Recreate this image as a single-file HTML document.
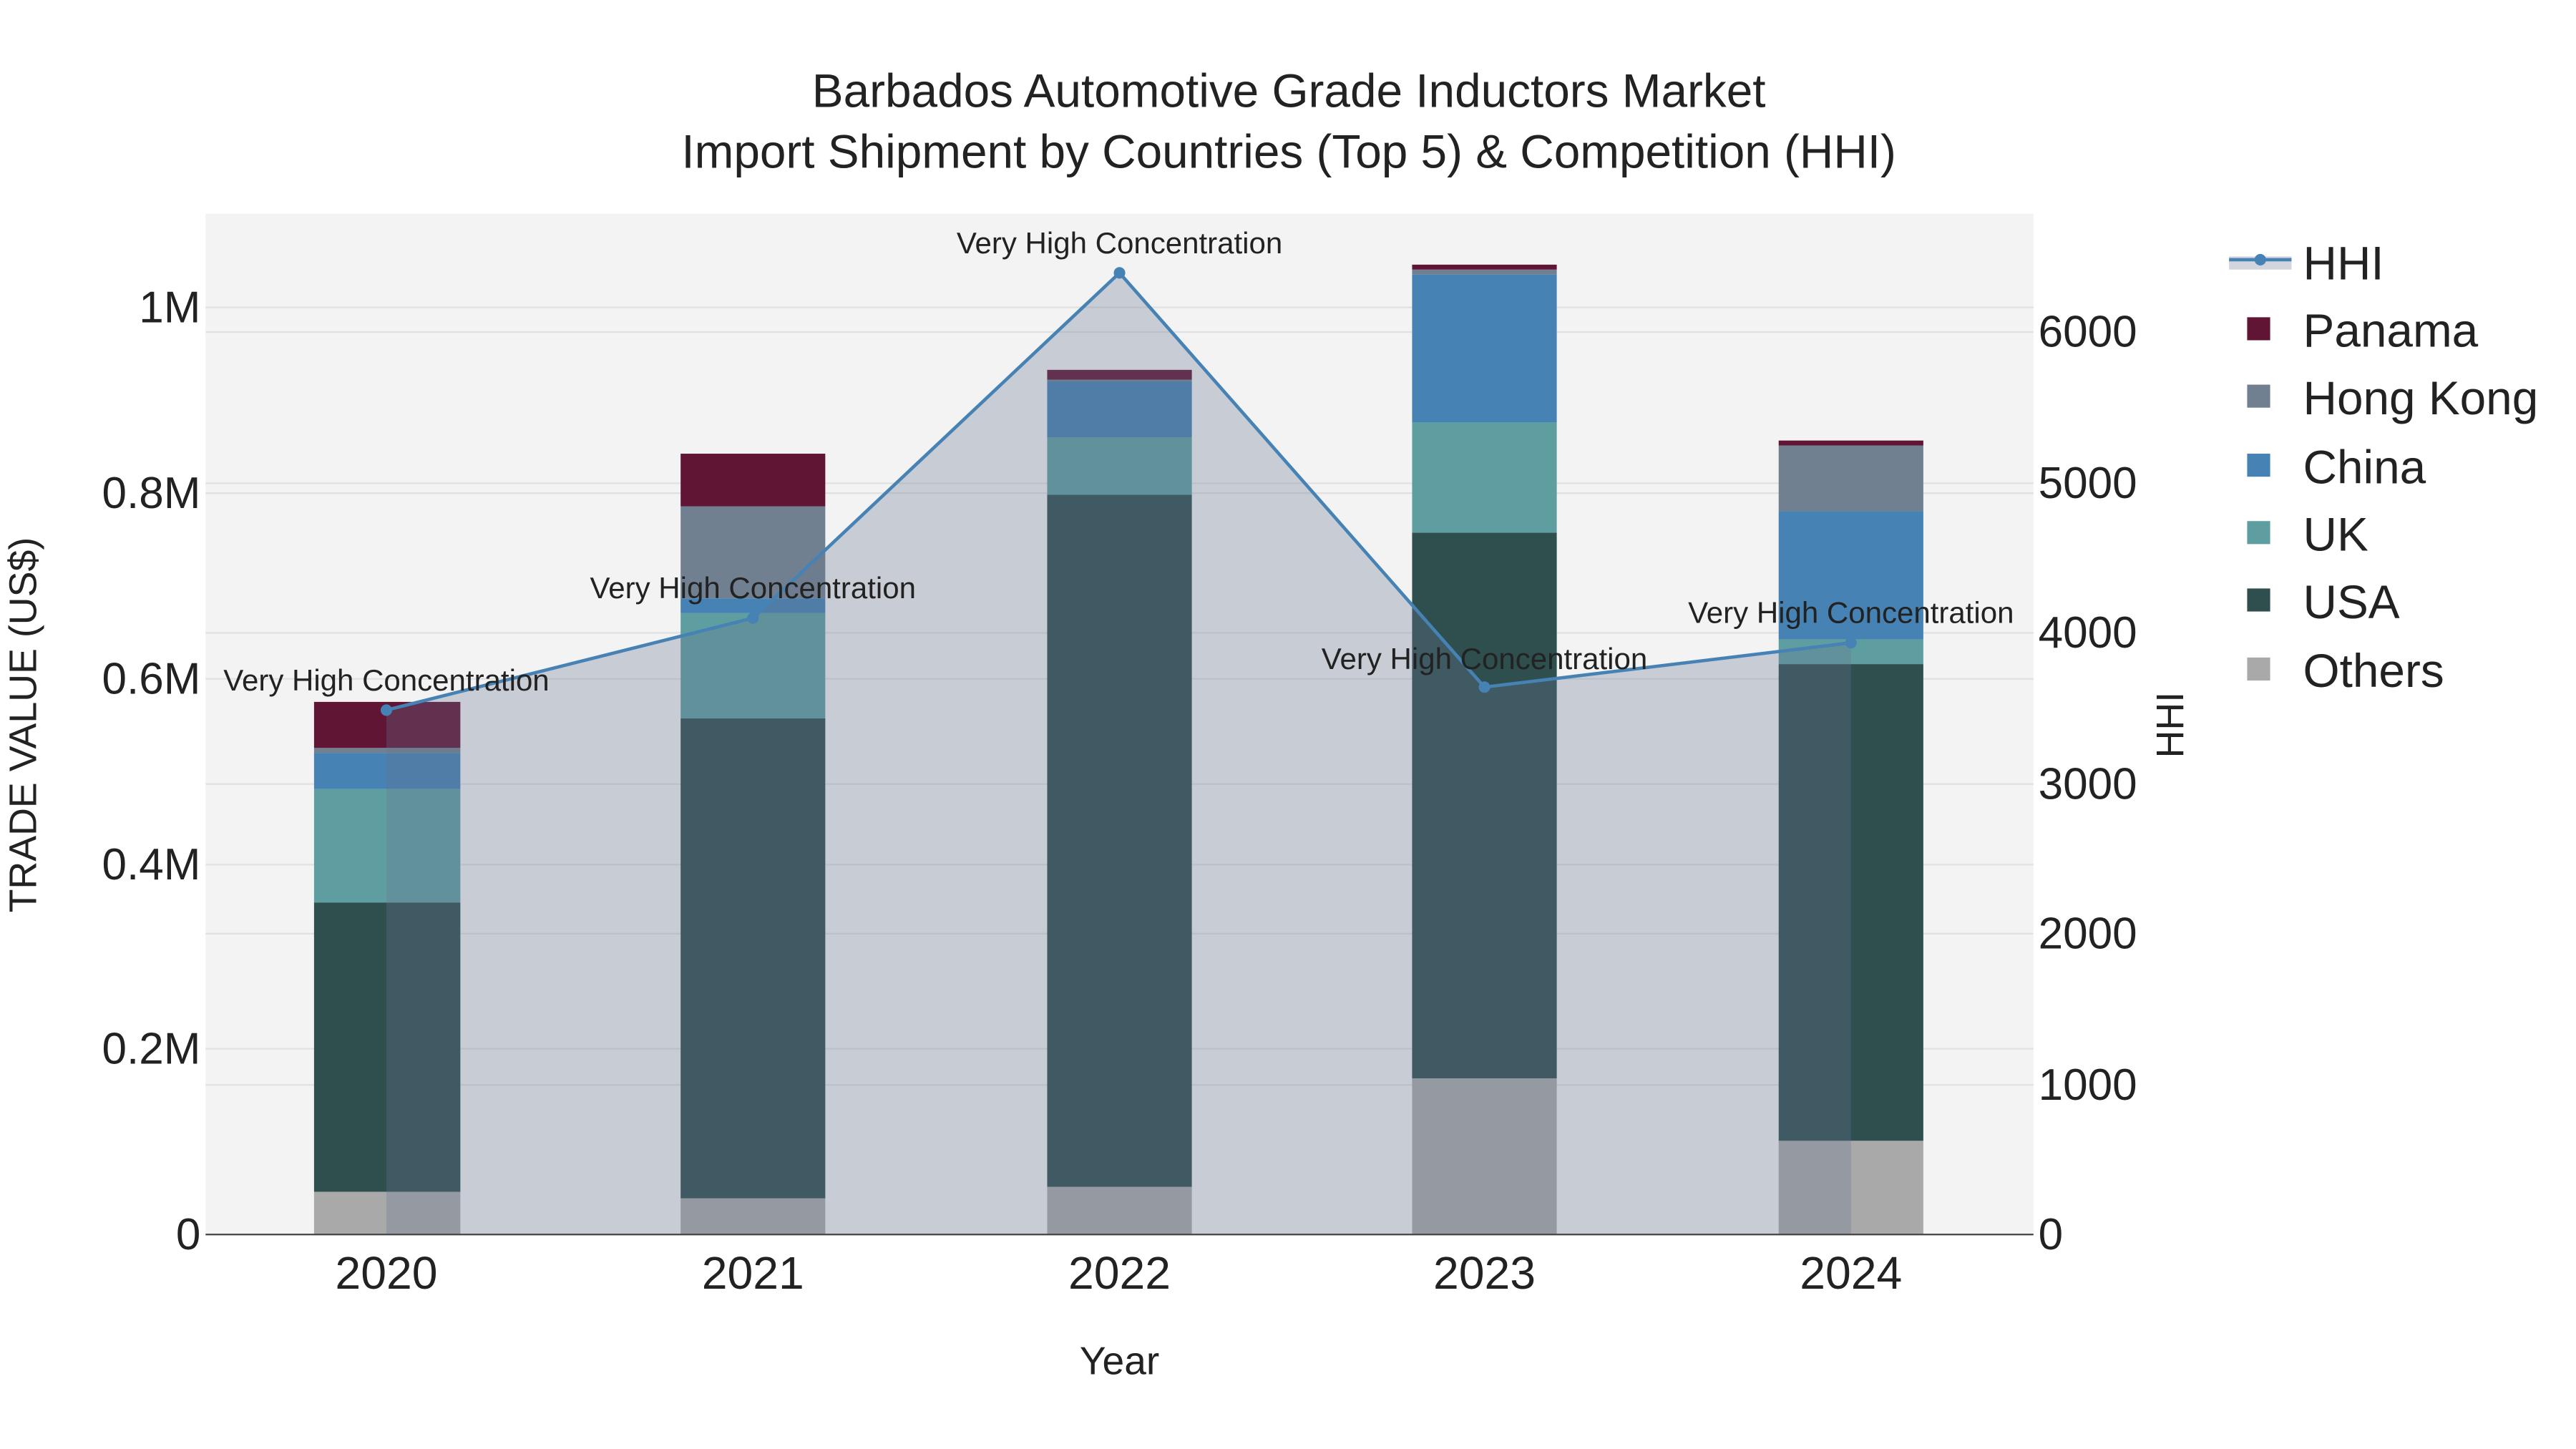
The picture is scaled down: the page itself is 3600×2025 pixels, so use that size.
<!DOCTYPE html>
<html><head><meta charset="utf-8"><style>
html,body{margin:0;padding:0;background:#fff;}
svg{display:block;}
text{font-family:"Liberation Sans",sans-serif;fill:#222;}
</style></head><body>
<svg width="3600" height="2025" viewBox="0 0 1567 881.5" xmlns="http://www.w3.org/2000/svg">
<rect x="0" y="0" width="1567" height="881.5" fill="#fff"/>
<rect x="125" y="130" width="1112" height="621" fill="#f3f3f3"/>
<g stroke="#e1e1e1" stroke-width="1">
<line x1="125" x2="1237" y1="187" y2="187"/><line x1="125" x2="1237" y1="300" y2="300"/>
<line x1="125" x2="1237" y1="413" y2="413"/><line x1="125" x2="1237" y1="526" y2="526"/>
<line x1="125" x2="1237" y1="638" y2="638"/>
<line x1="125" x2="1237" y1="202" y2="202"/><line x1="125" x2="1237" y1="294" y2="294"/>
<line x1="125" x2="1237" y1="385" y2="385"/><line x1="125" x2="1237" y1="477" y2="477"/>
<line x1="125" x2="1237" y1="568" y2="568"/><line x1="125" x2="1237" y1="660" y2="660"/>
</g>
<g>
<rect x="191" y="725" width="89" height="26" fill="#a9a9a9"/>
<rect x="191" y="549" width="89" height="176" fill="#2f4f4f"/>
<rect x="191" y="480" width="89" height="69" fill="#5f9ea0"/>
<rect x="191" y="458" width="89" height="22" fill="#4682b4"/>
<rect x="191" y="455" width="89" height="3" fill="#708090"/>
<rect x="191" y="427" width="89" height="28" fill="#601535"/>
<rect x="414" y="729" width="88" height="22" fill="#a9a9a9"/>
<rect x="414" y="437" width="88" height="292" fill="#2f4f4f"/>
<rect x="414" y="373" width="88" height="64" fill="#5f9ea0"/>
<rect x="414" y="364" width="88" height="9" fill="#4682b4"/>
<rect x="414" y="308" width="88" height="56" fill="#708090"/>
<rect x="414" y="276" width="88" height="32" fill="#601535"/>
<rect x="637" y="722" width="88" height="29" fill="#a9a9a9"/>
<rect x="637" y="301" width="88" height="421" fill="#2f4f4f"/>
<rect x="637" y="266" width="88" height="35" fill="#5f9ea0"/>
<rect x="637" y="232" width="88" height="34" fill="#4682b4"/>
<rect x="637" y="231" width="88" height="1" fill="#708090"/>
<rect x="637" y="225" width="88" height="6" fill="#601535"/>
<rect x="859" y="656" width="88" height="95" fill="#a9a9a9"/>
<rect x="859" y="324" width="88" height="332" fill="#2f4f4f"/>
<rect x="859" y="257" width="88" height="67" fill="#5f9ea0"/>
<rect x="859" y="167" width="88" height="90" fill="#4682b4"/>
<rect x="859" y="164" width="88" height="3" fill="#708090"/>
<rect x="859" y="161" width="88" height="3" fill="#601535"/>
<rect x="1082" y="694" width="88" height="57" fill="#a9a9a9"/>
<rect x="1082" y="404" width="88" height="290" fill="#2f4f4f"/>
<rect x="1082" y="389" width="88" height="15" fill="#5f9ea0"/>
<rect x="1082" y="311" width="88" height="78" fill="#4682b4"/>
<rect x="1082" y="271" width="88" height="40" fill="#708090"/>
<rect x="1082" y="268" width="88" height="3" fill="#601535"/>
</g>
<polygon points="235,751 235,432 458,376 681,166 903,418 1126,391 1126,751" fill="rgb(103,116,143)" fill-opacity="0.3"/>
<polyline points="235,432 458,376 681,166 903,418 1126,391" fill="none" stroke="#4682b4" stroke-width="2"/>
<g fill="#4682b4"><circle cx="235" cy="432" r="3.5"/><circle cx="458" cy="376" r="3.5"/><circle cx="681" cy="166" r="3.5"/><circle cx="903" cy="418" r="3.5"/><circle cx="1126" cy="391" r="3.5"/></g>
<line x1="125" x2="1237" y1="751" y2="751" stroke="#444" stroke-width="1"/>
<g font-size="18.3" text-anchor="middle">
<text x="235" y="420">Very High Concentration</text>
<text x="458" y="364">Very High Concentration</text>
<text x="681" y="154">Very High Concentration</text>
<text x="903" y="407">Very High Concentration</text>
<text x="1126" y="379">Very High Concentration</text>
</g>
<g font-size="28.6" text-anchor="middle">
<text x="784" y="65">Barbados Automotive Grade Inductors Market</text>
<text x="784" y="102">Import Shipment by Countries (Top 5) &amp; Competition (HHI)</text>
</g>
<g font-size="27" text-anchor="end">
<text x="122" y="760">0</text><text x="122" y="647">0.2M</text><text x="122" y="535">0.4M</text>
<text x="122" y="422">0.6M</text><text x="122" y="309">0.8M</text><text x="122" y="196">1M</text>
</g>
<g font-size="27" text-anchor="start">
<text x="1240" y="760">0</text><text x="1240" y="669">1000</text><text x="1240" y="577">2000</text>
<text x="1240" y="486">3000</text><text x="1240" y="394">4000</text><text x="1240" y="303">5000</text>
<text x="1240" y="211">6000</text>
</g>
<g font-size="28" text-anchor="middle">
<text x="235" y="784">2020</text><text x="458" y="784">2021</text><text x="681" y="784">2022</text>
<text x="903" y="784">2023</text><text x="1126" y="784">2024</text>
</g>
<text x="681" y="836" font-size="24" text-anchor="middle">Year</text>
<text transform="translate(22,441) rotate(-90)" font-size="23.4" text-anchor="middle">TRADE VALUE (US$)</text>
<text transform="translate(1328,441) rotate(-90)" font-size="23.4" text-anchor="middle">HHI</text>
<rect x="1356" y="156" width="38" height="8" fill="rgb(103,116,143)" fill-opacity="0.3"/>
<line x1="1356" x2="1394" y1="158" y2="158" stroke="#4682b4" stroke-width="2"/>
<circle cx="1375" cy="158" r="3.5" fill="#4682b4"/>
<rect x="1367" y="193" width="14" height="14" fill="#601535"/>
<rect x="1367" y="234" width="14" height="14" fill="#708090"/>
<rect x="1367" y="276" width="14" height="14" fill="#4682b4"/>
<rect x="1367" y="317" width="14" height="14" fill="#5f9ea0"/>
<rect x="1367" y="358" width="14" height="14" fill="#2f4f4f"/>
<rect x="1367" y="400" width="14" height="14" fill="#a9a9a9"/>
<g font-size="28.6">
<text x="1401" y="170">HHI</text><text x="1401" y="211">Panama</text><text x="1401" y="252">Hong Kong</text>
<text x="1401" y="294">China</text><text x="1401" y="335">UK</text><text x="1401" y="376">USA</text>
<text x="1401" y="418">Others</text>
</g>
</svg>
</body></html>
